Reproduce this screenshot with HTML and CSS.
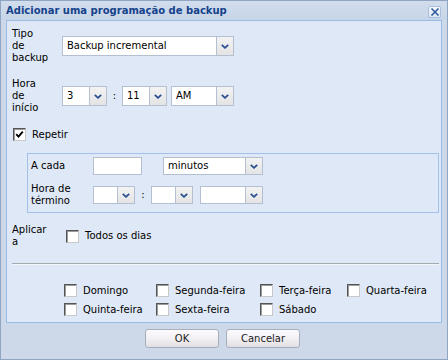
FILE: index.html
```html
<!DOCTYPE html>
<html lang="pt">
<head>
    <meta charset="UTF-8">
    <title>Adicionar uma programação de backup</title>
    <link rel="stylesheet" href="styles.css">
</head>
<body>
    <div class="window">
        <div class="titlebar">
            <span class="title">Adicionar uma programação de backup</span>
            <span class="close-btn">
                <svg width="10" height="10" viewBox="0 0 10 10"><path d="M1.5 1.5 L8.5 8.5 M8.5 1.5 L1.5 8.5" stroke="#2f5a9c" stroke-width="1.6" fill="none"/></svg>
            </span>
        </div>

        <div class="panel">
            <div class="form-row">
                <div class="lbl"><span>Tipo de backup</span></div>
                <div class="combo combo-type">
                    <span class="combo-text">Backup incremental</span>
                    <span class="combo-btn"><svg width="8" height="5" viewBox="0 0 8 5"><path d="M0.8 0.8 L4 3.8 L7.2 0.8" stroke="#2a4f8f" stroke-width="1.8" fill="none"/></svg></span>
                </div>
            </div>

            <div class="form-row row-start">
                <div class="lbl"><span>Hora de início</span></div>
                <div class="combo combo-num">
                    <span class="combo-text">3</span>
                    <span class="combo-btn"><svg width="8" height="5" viewBox="0 0 8 5"><path d="M0.8 0.8 L4 3.8 L7.2 0.8" stroke="#2a4f8f" stroke-width="1.8" fill="none"/></svg></span>
                </div>
                <span class="sep">:</span>
                <div class="combo combo-num">
                    <span class="combo-text">11</span>
                    <span class="combo-btn"><svg width="8" height="5" viewBox="0 0 8 5"><path d="M0.8 0.8 L4 3.8 L7.2 0.8" stroke="#2a4f8f" stroke-width="1.8" fill="none"/></svg></span>
                </div>
                <div class="combo combo-ampm">
                    <span class="combo-text">AM</span>
                    <span class="combo-btn"><svg width="8" height="5" viewBox="0 0 8 5"><path d="M0.8 0.8 L4 3.8 L7.2 0.8" stroke="#2a4f8f" stroke-width="1.8" fill="none"/></svg></span>
                </div>
            </div>

            <div class="check-row repeat-row">
                <span class="checkbox checked">
                    <svg width="9" height="9" viewBox="0 0 9 9"><path d="M1.2 4.2 L3.5 6.6 L7.8 1.6" stroke="#000" stroke-width="1.9" fill="none"/></svg>
                </span>
                <span>Repetir</span>
            </div>

            <div class="repeat-box">
                <div class="box-row">
                    <div class="box-lbl">A cada</div>
                    <div class="field field-every"></div>
                    <div class="combo combo-unit">
                        <span class="combo-text">minutos</span>
                        <span class="combo-btn"><svg width="8" height="5" viewBox="0 0 8 5"><path d="M0.8 0.8 L4 3.8 L7.2 0.8" stroke="#2a4f8f" stroke-width="1.8" fill="none"/></svg></span>
                    </div>
                </div>
                <div class="box-row row-end">
                    <div class="box-lbl">Hora de término</div>
                    <div class="combo combo-small">
                        <span class="combo-text"></span>
                        <span class="combo-btn"><svg width="8" height="5" viewBox="0 0 8 5"><path d="M0.8 0.8 L4 3.8 L7.2 0.8" stroke="#2a4f8f" stroke-width="1.8" fill="none"/></svg></span>
                    </div>
                    <span class="sep sep-small">:</span>
                    <div class="combo combo-small">
                        <span class="combo-text"></span>
                        <span class="combo-btn"><svg width="8" height="5" viewBox="0 0 8 5"><path d="M0.8 0.8 L4 3.8 L7.2 0.8" stroke="#2a4f8f" stroke-width="1.8" fill="none"/></svg></span>
                    </div>
                    <div class="combo combo-ampm-small">
                        <span class="combo-text"></span>
                        <span class="combo-btn"><svg width="8" height="5" viewBox="0 0 8 5"><path d="M0.8 0.8 L4 3.8 L7.2 0.8" stroke="#2a4f8f" stroke-width="1.8" fill="none"/></svg></span>
                    </div>
                </div>
            </div>

            <div class="form-row apply-row">
                <div class="lbl apply-lbl"><span>Aplicar a</span></div>
                <div class="check-row">
                    <span class="checkbox"></span>
                    <span>Todos os dias</span>
                </div>
            </div>

            <div class="divider"></div>

            <div class="days">
                <div class="check-row"><span class="checkbox"></span><span>Domingo</span></div>
                <div class="check-row"><span class="checkbox"></span><span>Segunda-feira</span></div>
                <div class="check-row"><span class="checkbox"></span><span>Terça-feira</span></div>
                <div class="check-row"><span class="checkbox"></span><span>Quarta-feira</span></div>
                <div class="check-row"><span class="checkbox"></span><span>Quinta-feira</span></div>
                <div class="check-row"><span class="checkbox"></span><span>Sexta-feira</span></div>
                <div class="check-row"><span class="checkbox"></span><span>Sábado</span></div>
            </div>
        </div>

        <div class="footer">
            <button class="btn">OK</button>
            <button class="btn">Cancelar</button>
        </div>
    </div>
</body>
</html>
```

FILE: styles.css
```css
* {
    margin: 0;
    padding: 0;
    box-sizing: border-box;
}

body {
    font-family: 'DejaVu Sans', Verdana, sans-serif;
    font-size: 10px;
    color: #000;
    background: #fff;
}

.window {
    width: 448px;
    height: 360px;
    display: flex;
    flex-direction: column;
    border: 1px solid #8fa5c2;
    background: #cdd9e8;
}

.titlebar {
    height: 19px;
    display: flex;
    align-items: center;
    justify-content: space-between;
    padding: 0 6px 0 5px;
    background: linear-gradient(#d1dded, #c6d5e7);
}

.title {
    font-weight: bold;
    font-size: 10px;
    color: #15428b;
}

.close-btn {
    width: 13px;
    height: 12px;
    display: flex;
    align-items: center;
    justify-content: center;
    border: 1px solid #a9bfde;
    border-radius: 2px;
    background: linear-gradient(#f4f8fd, #dce7f5);
    margin-top: 2px;
}

.panel {
    flex: 1;
    margin: 0 5px;
    background: #dfe8f6;
    border: 1px solid #99bbe8;
    padding: 7px 2px 0 5px;
    line-height: 12px;
}

.form-row {
    display: flex;
    align-items: center;
}

.row-start {
    margin-top: 14px;
}

.lbl {
    flex: 0 0 50px;
}

/* one word per line, like the original narrow label column */
.lbl span {
    display: block;
    width: min-content;
}

.combo {
    display: flex;
    height: 20px;
}

.combo-text {
    flex: 1;
    display: flex;
    align-items: center;
    padding-left: 4px;
    background: #fff;
    border: 1px solid #b5bfd2;
    border-right: none;
}

.combo-btn {
    width: 18px;
    display: flex;
    align-items: center;
    justify-content: center;
    background: linear-gradient(#f3f3f3, #e4e4e4);
    border: 1px solid #b5bfd2;
}

.combo-type {
    width: 172px;
}

.combo-num {
    width: 45px;
}

.combo-ampm {
    width: 63px;
    margin-left: 4px;
}

.sep {
    width: 15px;
    text-align: center;
}

.check-row {
    display: flex;
    align-items: center;
    height: 13px;
}

.checkbox {
    width: 13px;
    height: 13px;
    margin-right: 6px;
    display: flex;
    align-items: center;
    justify-content: center;
    background: #fff;
    border: 1px solid;
    border-color: #555 #c8c8c8 #c8c8c8 #555;
    box-shadow: inset 1px 1px 0 #9a9a9a;
}

.repeat-row {
    margin-top: 14px;
    margin-left: 1px;
}

.repeat-box {
    margin: 12px 0 0 15px;
    border: 1px solid #a3c0ea;
    padding: 3px 4px 5px 3px;
}

.box-row {
    display: flex;
    align-items: center;
}

.row-end {
    margin-top: 8px;
}

.box-lbl {
    width: 50px;
    margin-right: 12px;
}

.field {
    height: 18px;
    background: #fff;
    border: 1px solid #b5bfd2;
}

.field-every {
    width: 49px;
    margin-right: 21px;
}

.box-row .combo {
    height: 18px;
}

.combo-unit {
    width: 100px;
}

.combo-small {
    width: 42px;
}

.sep-small {
    width: 16px;
}

.combo-ampm-small {
    width: 63px;
    margin-left: 7px;
}

.apply-row {
    margin-top: 11px;
}

.apply-lbl {
    flex-basis: 54px;
}

.divider {
    margin-top: 15px;
    height: 2px;
    border-top: 1px solid #a5a9b0;
    border-bottom: 1px solid #f3f6fb;
}

.days {
    display: grid;
    grid-template-columns: 92px 104px 87px auto;
    row-gap: 6px;
    margin: 19px 0 0 52px;
}

.footer {
    height: 36px;
    display: flex;
    justify-content: center;
    align-items: flex-start;
    gap: 7px;
    padding: 6px 3px 0 0;
}

.btn {
    width: 74px;
    height: 19px;
    font-family: 'DejaVu Sans', Verdana, sans-serif;
    font-size: 10px;
    color: #222;
    border: 1px solid #a7aebb;
    border-radius: 3px;
    background: linear-gradient(#fdfbfd 0%, #f3f0f3 50%, #e2dfe2 100%);
}
```
